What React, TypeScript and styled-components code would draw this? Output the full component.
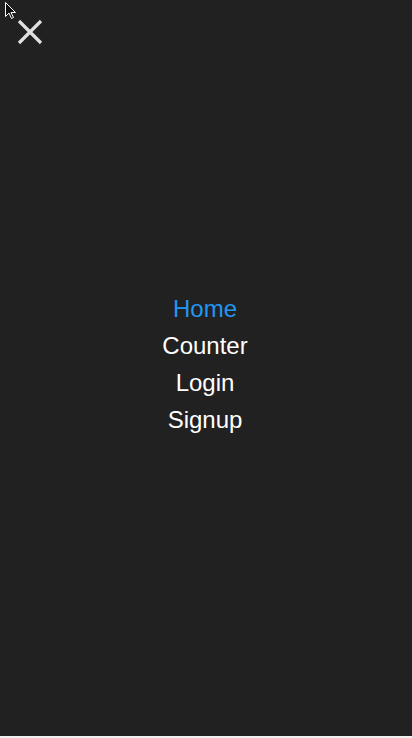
import React from "react";
import styled, { createGlobalStyle } from "styled-components";

const Global = createGlobalStyle`
  html, body { margin: 0; padding: 0; background: #f0f0f0; }
  body { font-family: "Liberation Sans", Arial, sans-serif; }
`;

const Overlay = styled.div`
  position: relative;
  width: 412px;
  height: 736px;
  background: #212121;
  display: flex;
  flex-direction: column;
`;

const Header = styled.div`
  display: flex;
  padding: 16px 0 0 15px;
  height: 48px;
  box-sizing: border-box;
`;

const CloseButton = styled.button`
  width: 30px;
  height: 32px;
  padding: 0;
  border: none;
  background: transparent;
  color: #e0e0e0;
  display: flex;
  align-items: center;
  justify-content: center;
  cursor: pointer;
`;

const Nav = styled.nav`
  flex: 1;
  display: flex;
  flex-direction: column;
  align-items: center;
  justify-content: center;
  padding-right: 2px;
  padding-bottom: 56px;
`;

const NavLink = styled.a<{ $active?: boolean }>`
  font-size: 24px;
  line-height: 37px;
  color: ${(p) => (p.$active ? "#2196f3" : "#ffffff")};
  text-decoration: none;
`;

const Pointer = styled.svg`
  position: absolute;
  left: 5px;
  top: 2px;
`;

export default function App() {
  return (
    <>
      <Global />
      <Overlay>
        <Header>
          <CloseButton aria-label="Close">
            <svg width="30" height="32" viewBox="0 0 30 32">
              <path d="M4 5 L26 27 M26 5 L4 27" stroke="currentColor" strokeWidth="3.2" />
            </svg>
          </CloseButton>
        </Header>
        <Nav>
          <NavLink $active href="#">Home</NavLink>
          <NavLink href="#">Counter</NavLink>
          <NavLink href="#">Login</NavLink>
          <NavLink href="#">Signup</NavLink>
        </Nav>
        <Pointer width="14" height="20" viewBox="0 0 14 20">
          <path d="M0.5 0.5 L0.5 14.5 L4 11 L6.5 16.5 L8.5 15.5 L6 10.5 L10.5 10.5 Z" fill="#111" stroke="#fff" strokeWidth="1" />
        </Pointer>
      </Overlay>
    </>
  );
}
